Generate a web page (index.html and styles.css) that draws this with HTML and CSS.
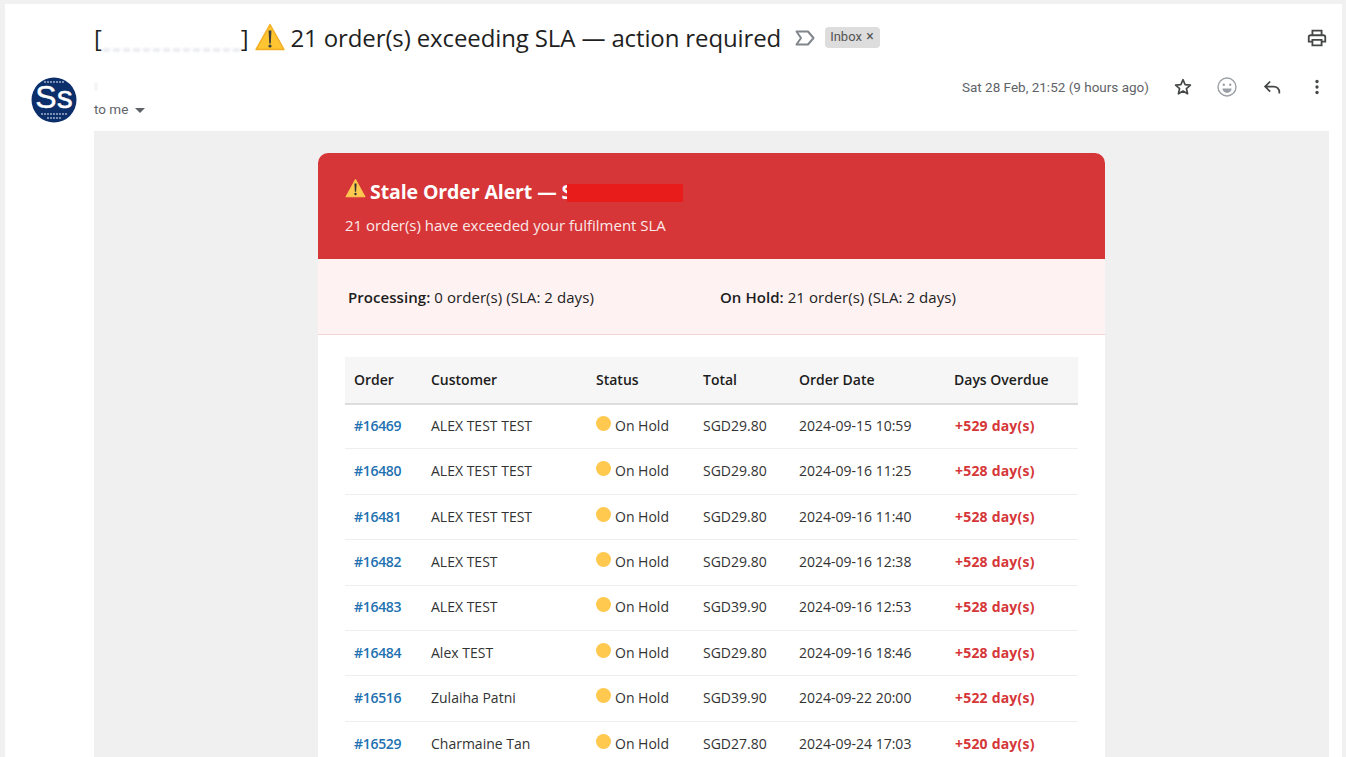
FILE: index.html
```
<!DOCTYPE html>
<html lang="en">
<head>
<meta charset="utf-8">
<title>21 order(s) exceeding SLA</title>
<link rel="stylesheet" href="styles.css">
</head>
<body>
<main class="mail">
  <header class="subject-row">
    <h1 class="subject">
      <span>[</span><span class="smudge"></span><span>]</span>
      <svg class="warn-big" viewBox="0 0 30 28"><path d="M15 1.5 29 26.500H1z" fill="#fdc531" stroke="#f3ad25" stroke-width="1.500" stroke-linejoin="round"/><path d="M13.600 7.500h2.800l-.6 13h-1.600z" fill="#3c3c3c"/><circle cx="15" cy="23" r="1.600" fill="#3c3c3c"/></svg>
      <span>21 order(s) exceeding SLA — action required</span>
    </h1>
    <svg class="label-icon" viewBox="0 0 20 16"><path d="M1.500 1.500h11.500l5.500 6.500-5.500 6.500H1.500L6 8z" fill="none" stroke="#80868b" stroke-width="2" stroke-linejoin="round"/></svg>
    <span class="chip">Inbox <span class="chip-x">×</span></span>
    <svg class="print" viewBox="0 0 24 24"><path d="M19 8h-1V3H6v5H5a3 3 0 0 0-3 3v6h4v4h12v-4h4v-6a3 3 0 0 0-3-3zM8 5h8v3H8zm8 14H8v-4h8zm4-4h-2v-2H6v2H4v-4a1 1 0 0 1 1-1h14a1 1 0 0 1 1 1z" fill="#444746"/></svg>
  </header>

  <section class="sender-row">
    <svg class="avatar" viewBox="0 0 46 46">
      <circle cx="23" cy="23" r="22.500" fill="#0c2f6b"/>
      <text x="23" y="31" class="avatar-text" text-anchor="middle">Ss</text>
      <path d="M13 5h20M10 37h26M16 41h14" stroke="#9fb0cc" stroke-width="1.500" stroke-dasharray="2 1"/>
    </svg>
    <div class="sender">
      <div class="sender-name"></div>
      <div class="to-me">to me <span class="caret"></span></div>
    </div>
    <div class="meta">
      <span class="date">Sat 28 Feb, 21:52 (9 hours ago)</span>
      <svg class="act star" viewBox="0 0 24 24"><path d="m12 4 2.300 5.400 5.800.5-4.400 3.800 1.300 5.700L12 16.400l-5 3 1.300-5.700L3.900 9.900l5.800-.5z" fill="none" stroke="#444746" stroke-width="1.800" stroke-linejoin="round"/></svg>
      <svg class="act" viewBox="0 0 24 24"><circle cx="12" cy="12" r="9.800" fill="none" stroke="#9aa0a6" stroke-width="1.500"/><circle cx="8.500" cy="9.500" r="1.300" fill="#9aa0a6"/><circle cx="15.500" cy="9.500" r="1.300" fill="#9aa0a6"/><path d="M7 13.500h10a5 5 0 0 1-10 0z" fill="#9aa0a6"/></svg>
      <svg class="act" viewBox="0 0 24 24"><path d="M10 6 4.500 11.500 10 17M5 11.500h9a6 6 0 0 1 6 6v1.500" fill="none" stroke="#444746" stroke-width="1.900"/></svg>
      <svg class="act more" viewBox="0 0 24 24"><circle cx="12" cy="6" r="1.800" fill="#444746"/><circle cx="12" cy="12" r="1.800" fill="#444746"/><circle cx="12" cy="18" r="1.800" fill="#444746"/></svg>
    </div>
  </section>

  <section class="message">
    <article class="card">
      <div class="alert">
        <h2 class="alert-title">
          <svg class="warn-small" viewBox="0 0 30 28"><path d="M15 2 28.500 26.500h-27z" fill="#ffc84f" stroke="#ffc84f" stroke-width="1.500" stroke-linejoin="round"/><path d="M13.500 7.500h3l-.6 12h-1.800z" fill="#333"/><circle cx="15" cy="22.500" r="1.700" fill="#333"/></svg>
          Stale Order Alert — S<span class="redact"></span>
        </h2>
        <p class="alert-sub">21 order(s) have exceeded your fulfilment SLA</p>
      </div>
      <div class="summary">
        <div class="sum-a"><b>Processing:</b> 0 order(s) (SLA: 2 days)</div>
        <div><b>On Hold:</b> 21 order(s) (SLA: 2 days)</div>
      </div>
      <div class="table-wrap">
        <table class="orders">
          <thead>
            <tr><th class="c1">Order</th><th class="c2">Customer</th><th class="c3">Status</th><th class="c4">Total</th><th class="c5">Order Date</th><th class="c6">Days Overdue</th></tr>
          </thead>
          <tbody>
            <tr><td class="id">#16469</td><td>ALEX TEST TEST</td><td><span class="dot"></span>On Hold</td><td>SGD29.80</td><td>2024-09-15 10:59</td><td class="late">+529 day(s)</td></tr>
            <tr><td class="id">#16480</td><td>ALEX TEST TEST</td><td><span class="dot"></span>On Hold</td><td>SGD29.80</td><td>2024-09-16 11:25</td><td class="late">+528 day(s)</td></tr>
            <tr><td class="id">#16481</td><td>ALEX TEST TEST</td><td><span class="dot"></span>On Hold</td><td>SGD29.80</td><td>2024-09-16 11:40</td><td class="late">+528 day(s)</td></tr>
            <tr><td class="id">#16482</td><td>ALEX TEST</td><td><span class="dot"></span>On Hold</td><td>SGD29.80</td><td>2024-09-16 12:38</td><td class="late">+528 day(s)</td></tr>
            <tr><td class="id">#16483</td><td>ALEX TEST</td><td><span class="dot"></span>On Hold</td><td>SGD39.90</td><td>2024-09-16 12:53</td><td class="late">+528 day(s)</td></tr>
            <tr><td class="id">#16484</td><td>Alex TEST</td><td><span class="dot"></span>On Hold</td><td>SGD29.80</td><td>2024-09-16 18:46</td><td class="late">+528 day(s)</td></tr>
            <tr><td class="id">#16516</td><td>Zulaiha Patni</td><td><span class="dot"></span>On Hold</td><td>SGD39.90</td><td>2024-09-22 20:00</td><td class="late">+522 day(s)</td></tr>
            <tr><td class="id">#16529</td><td>Charmaine Tan</td><td><span class="dot"></span>On Hold</td><td>SGD27.80</td><td>2024-09-24 17:03</td><td class="late">+520 day(s)</td></tr>
          </tbody>
        </table>
      </div>
    </article>
  </section>
</main>
</body>
</html>
```
FILE: styles.css
```
* { box-sizing: border-box; }
html, body { margin: 0; height: 757px; overflow: hidden; }
body { background: #f1f1f1; padding: 4px 4px 0 5px; font-family: Roboto, "Liberation Sans", sans-serif; color: #202124; }
.mail { background: #fff; height: 753px; overflow: hidden; display: flex; flex-direction: column; }

.subject-row { display: flex; align-items: center; height: 67px; padding: 0 14px 0 89px; flex: none; }
.subject { margin: 0; font-weight: 400; font-size: 24px; line-height: 32px; display: flex; align-items: center; font-family: "Open Sans", Roboto, sans-serif; letter-spacing: -0.12px; color: #1f1f1f; white-space: nowrap; }
.smudge { width: 137px; height: 4px; margin: 10px 1px 0 1px; background: repeating-linear-gradient(90deg, #eceef1 0 7px, #fff 7px 10px); filter: blur(1px); align-self: center; transform: translateY(7px); }
.warn-big { width: 30px; height: 28px; margin: 0 5px 2px 7px; flex: none; }
.label-icon { width: 20px; height: 16px; margin-left: 14px; flex: none; }
.chip { margin-left: 10px; background: #ddd; border-radius: 4px; height: 21px; padding: 0 6px 0 5px; font-size: 13px; line-height: 19px; color: #555; white-space: nowrap; flex: none; }
.chip-x { font-size: 14px; margin-left: 1px; }
.print { width: 22px; height: 22px; margin-left: auto; flex: none; }

.sender-row { display: flex; height: 60px; flex: none; }
.avatar { width: 46px; height: 46px; margin: 6px 0 0 26px; flex: none; }
.avatar-text { font-family: "Liberation Sans", sans-serif; font-size: 32px; font-weight: 400; fill: #fff; stroke: #fff; stroke-width: 0.4px; }
.sender { margin-left: 17px; padding-top: 8px; }
.sender-name { height: 17px; width: 100px; background: linear-gradient(90deg, #f6f6f6 0 4px, #fff 4px); background-size: 100% 8px; background-repeat: no-repeat; background-position: 0 4px; }
.to-me { font-size: 13.500px; line-height: 18px; color: #5f6368; margin-top: 4px; white-space: nowrap; }
.caret { display: inline-block; width: 0; height: 0; border: 5px solid transparent; border-top-color: #5f6368; border-bottom-width: 0; margin-left: 3px; vertical-align: 1px; }
.meta { margin-left: auto; display: flex; align-items: center; height: 32px; color: #5f6368; font-size: 13.500px; }
.date { margin-right: 23px; white-space: nowrap; }
.act { width: 22px; height: 22px; margin-right: 23px; flex: none; }
.act.star { margin-right: 22px; }
.act.more { margin-right: 14px; }

.message { margin-left: 89px; margin-right: 13px; background: #f0f0f0; flex: 1; padding: 22px 0 0 224px; }
.card { width: 787px; background: #fff; border-radius: 10px 10px 0 0; overflow: hidden; font-family: "Open Sans", "Noto Sans", sans-serif; font-size: 14px; color: #222; }

.alert { height: 106px; background: #d63638; color: #fff; padding: 24px 27px 0; }
.alert-title { margin: 0; font-size: 19.500px; line-height: 30px; font-weight: 700; display: flex; align-items: center; white-space: nowrap; letter-spacing: -0.1px; }
.warn-small { width: 21px; height: 20px; margin: -8px 4px 0 0; flex: none; }
.redact { width: 116px; height: 18px; background: #e91c1c; margin-left: -5px; margin-top: 2px; }
.alert-sub { margin: 8px 0 0; font-size: 15px; line-height: 20px; color: #fbe9e9; white-space: nowrap; }

.summary { height: 76px; background: #fef2f2; border-bottom: 1px solid #f3d5d5; display: flex; align-items: center; padding: 1px 0 0 30px; font-size: 15px; letter-spacing: 0.06px; }
.sum-a { width: 372px; }
.summary b { font-weight: 600; color: #1d1d1d; }

.table-wrap { padding: 22px 27px 0; }
.orders { width: 733px; table-layout: fixed; border-collapse: collapse; line-height: 20px; }
.orders th { height: 46.600px; background: #f6f6f6; border-bottom: 2px solid #ddd; text-align: left; font-weight: 600; padding: 0 9px; color: #1d1d1d; }
.orders td { height: 45.400px; border-bottom: 1px solid #eee; padding: 0 9px 1px; white-space: nowrap; color: #333; }
.c1 { width: 77px; } .c2 { width: 165px; } .c3 { width: 107px; } .c4 { width: 96px; } .c5 { width: 155px; } .c6 { width: 133px; }
.orders .id { color: #2271b1; font-weight: 600; letter-spacing: -0.3px; }
.orders .late { color: #d63638; font-weight: 700; padding-left: 10px; letter-spacing: 0.2px; }
.dot { display: inline-block; width: 15px; height: 15px; border-radius: 50%; background: #ffc84f; margin: -2px 4px 0 0; vertical-align: 0; }
```
